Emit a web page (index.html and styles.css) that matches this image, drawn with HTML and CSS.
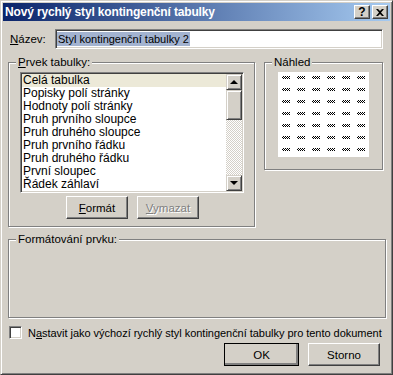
FILE: index.html
```html
<!DOCTYPE html>
<html lang="cs">
<head>
  <meta charset="UTF-8">
  <meta name="viewport" content="width=device-width, initial-scale=1.0">
  <title>Nový rychlý styl kontingenční tabulky</title>
  <link rel="stylesheet" href="styles.css">
</head>
<body>
  <div class="window">
    <div class="titlebar">
      <span class="title">Nový rychlý styl kontingenční tabulky</span>
      <div class="caption-buttons">
        <button class="caption-btn help">?</button>
        <button class="caption-btn close">
          <svg width="8" height="7" viewBox="0 0 8 7"><path d="M0 0h2l2 2 2-2h2L5 3.5 8 7H6L4 5 2 7H0l3-3.5z" fill="#000"/></svg>
        </button>
      </div>
    </div>

    <div class="dialog">
      <div class="name-row">
        <span class="label"><u>N</u>ázev:</span>
        <div class="textbox"><span class="selected">Styl kontingenční tabulky 2</span></div>
      </div>

      <div class="top-groups">
        <div class="group elements">
          <span class="legend"><u>P</u>rvek tabulky:</span>
          <div class="listbox">
            <ul class="items">
              <li class="active">Celá tabulka</li>
              <li>Popisky polí stránky</li>
              <li>Hodnoty polí stránky</li>
              <li>Pruh prvního sloupce</li>
              <li>Pruh druhého sloupce</li>
              <li>Pruh prvního řádku</li>
              <li>Pruh druhého řádku</li>
              <li>První sloupec</li>
              <li>Řádek záhlaví</li>
            </ul>
            <div class="scrollbar">
              <div class="sb-btn"><span class="arrow up"></span></div>
              <div class="sb-thumb"></div>
              <div class="sb-track"></div>
              <div class="sb-btn"><span class="arrow down"></span></div>
            </div>
          </div>
          <div class="group-buttons">
            <button class="btn"><u>F</u>ormát</button>
            <button class="btn disabled"><u>V</u>ymazat</button>
          </div>
        </div>

        <div class="group preview">
          <span class="legend">Náhled</span>
          <div class="preview-box" id="preview"></div>
        </div>
      </div>

      <div class="group formatting">
        <span class="legend">Formátování prvku:</span>
      </div>

      <div class="check-row">
        <span class="checkbox"></span>
        <span class="check-label">N<u>a</u>stavit jako výchozí rychlý styl kontingenční tabulky pro tento dokument</span>
      </div>

      <div class="dialog-buttons">
        <button class="btn default">OK</button>
        <button class="btn cancel">Storno</button>
      </div>
    </div>
  </div>

  <script>
    // fill the preview grid with 6 x 7 tiny checkered marks
    const preview = document.getElementById("preview");
    for (let i = 0; i < 42; i++) {
      const cell = document.createElement("span");
      cell.className = "mark";
      preview.appendChild(cell);
    }
  </script>
</body>
</html>
```

FILE: styles.css
```css
body {
  margin: 0;
  background: #d4d0c8;
  font-family: "Liberation Sans", Arial, sans-serif;
  font-size: 11px;
  color: #000;
}
button {
  font-family: inherit;
  font-size: inherit;
  color: inherit;
  cursor: default;
}
.window {
  box-sizing: border-box;
  width: 393px;
  height: 375px;
  background: #d4d0c8;
  border: 1px solid;
  border-color: #d4d0c8 #404040 #404040 #d4d0c8;
  box-shadow: inset 1px 1px 0 #fff, inset -1px -1px 0 #808080;
  padding: 2px;
  display: flex;
  flex-direction: column;
}
.titlebar {
  height: 18px;
  background: linear-gradient(to right, #0a246a, #a6caf0);
  display: flex;
  align-items: center;
  justify-content: space-between;
  padding: 0 2px;
}
.title {
  color: #fff;
  font-weight: bold;
  font-size: 12px;
  letter-spacing: -0.15px;
}
.caption-buttons {
  display: flex;
  gap: 2px;
}
.caption-btn {
  box-sizing: border-box;
  width: 16px;
  height: 14px;
  padding: 0;
  background: #d4d0c8;
  border: 1px solid;
  border-color: #fff #404040 #404040 #fff;
  box-shadow: inset -1px -1px 0 #808080;
  display: flex;
  align-items: center;
  justify-content: center;
  font-weight: bold;
  font-size: 12px;
  line-height: 1;
}

.dialog {
  flex: 1;
  padding: 8px 5px 0 5px;
  display: flex;
  flex-direction: column;
}

/* name row */
.name-row {
  display: flex;
  align-items: center;
  height: 20px;
}
.label {
  width: 45px;
  padding-left: 2px;
  font-size: 11.5px;
}
.textbox {
  box-sizing: border-box;
  width: 328px;
  height: 20px;
  background: #fff;
  border: 1px solid;
  border-color: #808080 #fff #fff #808080;
  box-shadow: inset 1px 1px 0 #404040, inset -1px -1px 0 #d4d0c8;
  padding: 2px 0 0 1px;
  font-size: 11px;
}
.selected {
  background: #a3b3d0;
  padding: 0 1px;
  line-height: 14px;
  display: inline-block;
}

/* etched group frames */
.group {
  box-sizing: border-box;
  border: 1px solid #808080;
  box-shadow: 1px 1px 0 #fff, inset 1px 1px 0 #fff;
}
.legend {
  display: inline-block;
  background: #d4d0c8;
  padding: 0 2px;
  line-height: 13px;
  margin-top: -7px;
  margin-left: 7px;
  vertical-align: top;
  font-size: 11.5px;
}

.top-groups {
  display: flex;
  margin-top: 13px;
}
.elements {
  width: 247px;
  height: 165px;
  display: flex;
  flex-direction: column;
  align-items: flex-start;
}
.preview {
  width: 119px;
  height: 108px;
  margin-left: 9px;
  display: flex;
  flex-direction: column;
  align-items: flex-start;
}

/* listbox */
.listbox {
  box-sizing: border-box;
  width: 224px;
  height: 121px;
  margin: 3px 0 0 11px;
  background: #fff;
  border: 1px solid;
  border-color: #808080 #fff #fff #808080;
  box-shadow: inset 1px 1px 0 #404040, inset -1px -1px 0 #d4d0c8;
  padding: 1px;
  display: flex;
}
.items {
  list-style: none;
  margin: 0;
  padding: 0;
  flex: 1;
}
.items li {
  height: 13px;
  line-height: 13px;
  padding-left: 1px;
  font-size: 12px;
  white-space: nowrap;
}
.items li.active {
  background: #ece9d8;
}
.scrollbar {
  width: 16px;
  display: flex;
  flex-direction: column;
}
.sb-btn, .sb-thumb {
  box-sizing: border-box;
  background: #d4d0c8;
  border: 1px solid;
  border-color: #d4d0c8 #404040 #404040 #d4d0c8;
  box-shadow: inset 1px 1px 0 #fff, inset -1px -1px 0 #808080;
}
.sb-btn {
  height: 16px;
  display: flex;
  align-items: center;
  justify-content: center;
}
.sb-thumb {
  height: 30px;
}
.sb-track {
  flex: 1;
  background: repeating-conic-gradient(#fff 0 25%, #d4d0c8 0 50%) 0 0 / 2px 2px;
}
.arrow {
  width: 0;
  height: 0;
  border-left: 4px solid transparent;
  border-right: 4px solid transparent;
}
.arrow.up {
  border-bottom: 4px solid #000;
  margin-top: -1px;
}
.arrow.down {
  border-top: 4px solid #000;
}

/* push buttons */
.btn {
  box-sizing: border-box;
  height: 23px;
  padding: 0;
  background: #d4d0c8;
  border: 1px solid;
  border-color: #fff #404040 #404040 #fff;
  box-shadow: inset -1px -1px 0 #808080;
  font-size: 11.5px;
}
.btn.disabled {
  color: #808080;
  text-shadow: 1px 1px 0 #fff;
}
.group-buttons {
  display: flex;
  gap: 9px;
  margin: 3px 0 0 57px;
}
.group-buttons .btn {
  width: 62px;
}

/* preview */
.preview-box {
  width: 91px;
  height: 85px;
  margin: 3px 0 0 13px;
  background: #fff;
  box-sizing: border-box;
  padding: 4px 0 0 4px;
  display: grid;
  grid-template-columns: repeat(6, 15px);
  grid-auto-rows: 12px;
}
.mark {
  width: 8px;
  height: 3px;
  background: repeating-conic-gradient(#000 0 25%, #fff 0 50%) 0 0 / 2px 2px;
}

.formatting {
  width: 378px;
  height: 79px;
  margin-top: 12px;
}

.check-row {
  display: flex;
  align-items: center;
  gap: 6px;
  margin: 8px 0 0 1px;
  height: 13px;
}
.check-label {
  white-space: nowrap;
  font-size: 11px;
  letter-spacing: -0.03px;
}
.checkbox {
  box-sizing: border-box;
  width: 13px;
  height: 13px;
  background: #fff;
  border: 1px solid;
  border-color: #808080 #fff #fff #808080;
  box-shadow: inset 1px 1px 0 #404040, inset -1px -1px 0 #d4d0c8;
}

.dialog-buttons {
  display: flex;
  justify-content: flex-end;
  gap: 9px;
  margin: 4px 5px 0 0;
}
.btn.default {
  width: 75px;
  outline: 1px solid #000;
  outline-offset: -1px;
  box-shadow: inset -1px -1px 0 #808080, inset -2px -2px 0 #808080;
}
.btn.cancel {
  width: 72px;
}
```
